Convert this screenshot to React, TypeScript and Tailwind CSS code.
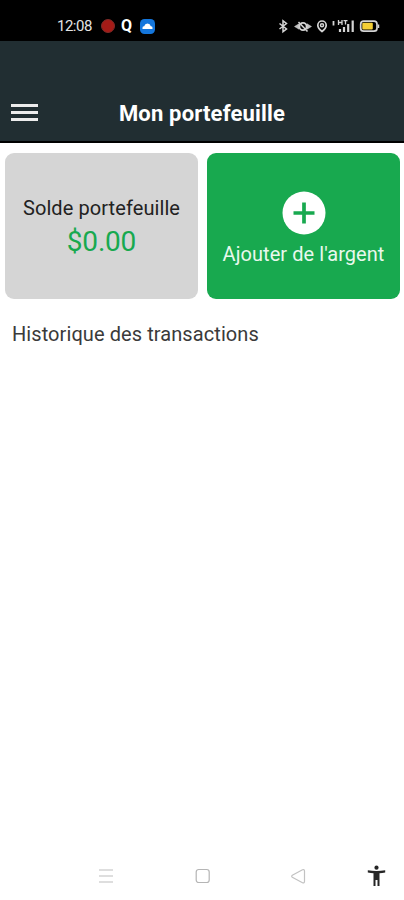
import type {ReactNode} from 'react';

function StatusBar() {
  return (
    <div className="flex h-[41px] items-center bg-black pt-[11px] pr-[24px] pl-[57px] text-[#e4e4e4]">
      <span className="w-[44px] text-[15px] leading-[30px] tracking-[-0.500px]">12:08</span>
      <span className="size-[14px] rounded-full border border-[#7d2a27] bg-[#a51b17]" />
      <span className="ml-[6px] w-[19px] text-[16px] leading-[30px] font-bold text-white">Q</span>
      <svg className="size-[15px]" viewBox="0 0 15 15">
        <rect width="15" height="15" rx="4.500" fill="#1476dc" />
        <path d="M2.500 10V9A1.600 1.600 0 0 1 4.200 7.200A3.400 3.400 0 0 1 10.800 7.200 1.600 1.600 0 0 1 12.500 9v1z" fill="#fff" />
      </svg>

      <svg className="ml-auto h-[16px] w-[102px]" viewBox="278 18 102 16" fill="none" stroke="#d4d4d4" strokeWidth="1.500">
        {/* bluetooth */}
        <path d="m279.500 23.500 7 5.500-3.500 2.700V20.800l3.500 2.700-7 5.500" />
        {/* eye */}
        <path d="M299 23.800 294.500 26.500l4.500 2.700zM307 23.800l4.500 2.700-4.500 2.700z" fill="#bdbdbd" strokeWidth="0.500" />
        <path d="m298.500 22 9 9.500" />
        <circle cx="303" cy="26.500" r="3.600" strokeWidth="1.800" />
        {/* location */}
        <path d="M322 31.500c-2.500-2-4.200-4-4.200-6.300a4.200 4.200 0 0 1 8.400 0c0 2.300-1.700 4.300-4.200 6.300z" strokeWidth="1.700" />
        <circle cx="322" cy="25.200" r="1.500" />
        {/* network */}
        <path d="M333.500 21v4.500" strokeWidth="1.800" />
        <path d="M338.500 20v5M338.500 22.500h3.500M342 20v5M343.500 20.700h4M345.500 20.500V24.500" strokeWidth="1.300" />
        <path d="M340 29v3M344 27v5M348.200 24v8M352.700 20.500v11.500" strokeWidth="2.200" />
        {/* battery */}
        <rect x="360.700" y="21.200" width="16.300" height="10" rx="3" strokeWidth="1.700" />
        <rect x="362.300" y="22.800" width="10.500" height="6.800" rx="1" fill="#f4cf35" stroke="none" />
        <path d="M378.500 24.500v3.500" />
      </svg>
    </div>
  );
}

function Header() {
  return (
    <header className="grid h-[102px] grid-cols-[1fr_auto_1fr] items-end border-b-2 border-black bg-[#212e32] px-[11px] pb-[13px]">
      <button type="button" aria-label="Menu" className="mb-[7px] flex w-[27px] flex-col gap-[4px]">
        <span className="h-[3px] bg-[#ececec]" />
        <span className="h-[3px] bg-[#ececec]" />
        <span className="h-[3px] bg-[#ececec]" />
      </button>
      <h1 className="text-[22px] leading-[28px] font-bold tracking-[0.180px] text-white">Mon portefeuille</h1>
    </header>
  );
}

function Card({className, children}: {className: string; children: ReactNode}) {
  return (
    <div className={`flex h-[146px] flex-col items-center rounded-[9px] whitespace-nowrap ${className}`}>
      {children}
    </div>
  );
}

function NavBar() {
  return (
    <nav className="mt-auto flex h-[48px] items-center pr-[18px] pl-[98px]">
      <svg className="h-[16px] w-[16px]" viewBox="0 0 16 16" stroke="#d4d4d4" strokeWidth="1.300">
        <path d="M1 2h14M1 8h14M1 14h14" />
      </svg>
      <svg className="ml-[81px] size-[16px]" viewBox="0 0 16 16" fill="none" stroke="#b5b5b5" strokeWidth="1.200">
        <rect x="1.200" y="1.500" width="13" height="13" rx="2.500" />
      </svg>
      <svg className="ml-[79px] size-[17px]" viewBox="0 0 17 17" fill="none" stroke="#c2c2c2" strokeWidth="1.200">
        <path d="M2.300 7.300 12.500 1.800q2-.8 2 1.200v10.500q0 2-2 1.200L2.300 9.200q-1.200-1 0-1.900z" />
      </svg>
      <svg className="ml-auto h-[22px] w-[19px]" viewBox="0 0 19 22" fill="#252525">
        <circle cx="9.500" cy="2.700" r="2.100" />
        <path d="M.8 5.300q8.700 1.300 17.400 0v2.200q-3 .5-5.700.7V21h-2v-6h-2v6h-2V8.200Q3.800 8 .8 7.500z" />
      </svg>
    </nav>
  );
}

export default function App() {
  return (
    <div className="flex h-[900px] w-[404px] flex-col overflow-hidden bg-white font-[Roboto,sans-serif]">
      <StatusBar />
      <Header />

      <main className="pt-[10px]">
        <section className="grid grid-cols-2 gap-[9px] pr-[4px] pl-[5px]">
          <Card className="bg-[#d5d5d5] pt-[42px]">
            <span className="text-[20px] leading-[26px] tracking-[0.080px] text-[#222]">Solde portefeuille</span>
            <span className="text-[28px] leading-[41px] tracking-[-0.200px] text-[#18a94f]">$0.00</span>
          </Card>
          <Card className="bg-[#18a94f] pt-[38px]">
            <svg className="size-[44px]" viewBox="0 0 44 44">
              <circle cx="22" cy="22" r="21.500" fill="#fff" />
              <path d="M22 11.500v21M11.500 22h21" stroke="#18a94f" strokeWidth="3.700" />
            </svg>
            <span className="mt-[6px] text-[20px] leading-[26px] tracking-[0.060px] text-[#e9f8ed]">Ajouter de l'argent</span>
          </Card>
        </section>
        <h2 className="mt-[22px] pl-[12px] text-[20px] leading-[26px] tracking-[0.080px] text-[#3a3a3a]">Historique des transactions</h2>
      </main>

      <NavBar />
    </div>
  );
}
